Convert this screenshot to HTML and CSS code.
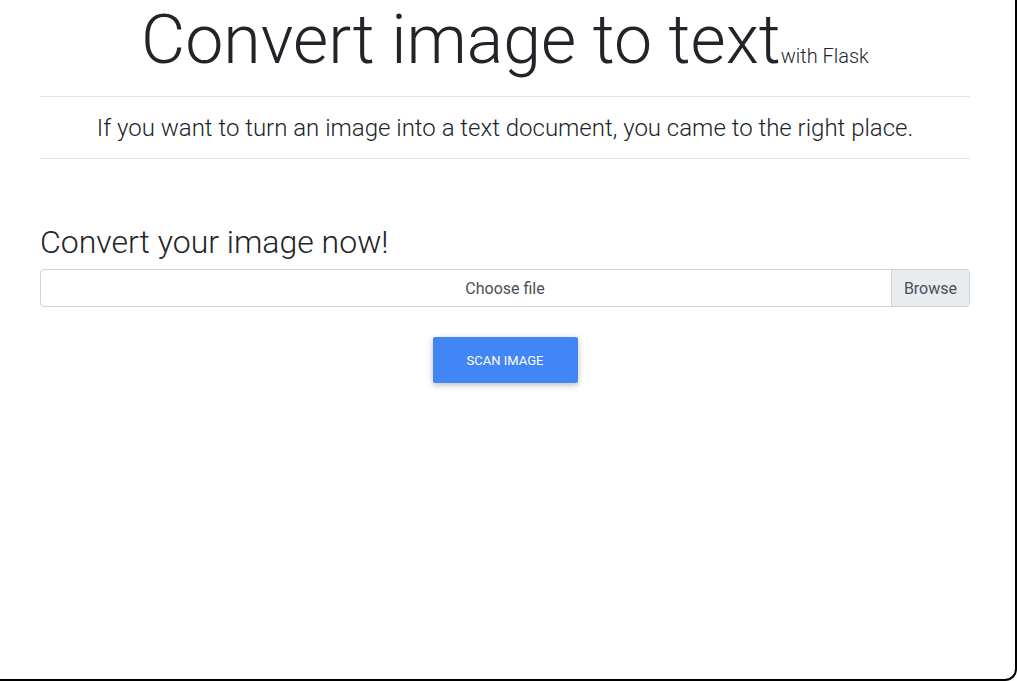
FILE: index.html
```html
<!DOCTYPE html>
<html lang="en">
<head>
    <meta charset="UTF-8">
    <meta name="viewport" content="width=device-width, initial-scale=1.0">
    <title>Convert image to text</title>
    <link rel="stylesheet" href="styles.css">
</head>
<body>
    <div class="frame">
        <div class="container">
            <h1 class="title">Convert image to text<small>with Flask</small></h1>
            <hr>
            <p class="lead">If you want to turn an image into a text document, you came to the right place.</p>
            <hr>
            <h2 class="subtitle">Convert your image now!</h2>
            <div class="custom-file">
                <span class="file-label">Choose file</span>
                <span class="file-browse">Browse</span>
            </div>
            <div class="actions">
                <button class="btn-scan">Scan image</button>
            </div>
        </div>
    </div>
</body>
</html>
```

FILE: styles.css
```css
* {
    box-sizing: border-box;
}
body {
    margin: 0;
    background: #fff;
    color: #212529;
    font-family: 'Roboto', 'Liberation Sans', sans-serif;
}
.frame {
    height: 681px;
    border-right: 2px solid #000;
    border-bottom: 2px solid #000;
    border-bottom-right-radius: 12px;
    overflow: hidden;
}
.container {
    width: 930px;
    margin-left: 40px;
}
.title {
    margin: 0;
    font-size: 68px;
    font-weight: 300;
    line-height: 80px;
    text-align: center;
}
.title small {
    font-size: 20px;
    font-weight: 300;
    line-height: 1;
}
hr {
    margin: 16px 0 0;
    border: 0;
    border-top: 1px solid rgba(0, 0, 0, 0.1);
}
.lead {
    margin: 16px 0 15px;
    font-size: 24px;
    font-weight: 300;
    line-height: 30px;
    text-align: center;
}
.lead + hr {
    margin-top: 0;
}
.subtitle {
    margin: 64px 0 8px;
    font-size: 32px;
    font-weight: 300;
    line-height: 38px;
}
.custom-file {
    position: relative;
    height: 38px;
    border: 1px solid #ced4da;
    border-radius: 4px;
    overflow: hidden;
    font-size: 16px;
    color: #495057;
}
.file-label {
    display: flex;
    height: 100%;
    align-items: center;
    justify-content: center;
}
.file-browse {
    position: absolute;
    top: 0;
    right: 0;
    bottom: 0;
    display: flex;
    align-items: center;
    padding: 0 12px;
    background: #e9ecef;
    border-left: 1px solid #ced4da;
}
.actions {
    display: flex;
    justify-content: center;
    margin-top: 30px;
}
.btn-scan {
    width: 145px;
    height: 46px;
    border: none;
    border-radius: 2px;
    background: #4285f4;
    color: #fff;
    font-family: inherit;
    font-size: 13px;
    text-transform: uppercase;
    box-shadow: 0 2px 5px 0 rgba(0, 0, 0, 0.16), 0 2px 10px 0 rgba(0, 0, 0, 0.12);
    cursor: pointer;
}
```
